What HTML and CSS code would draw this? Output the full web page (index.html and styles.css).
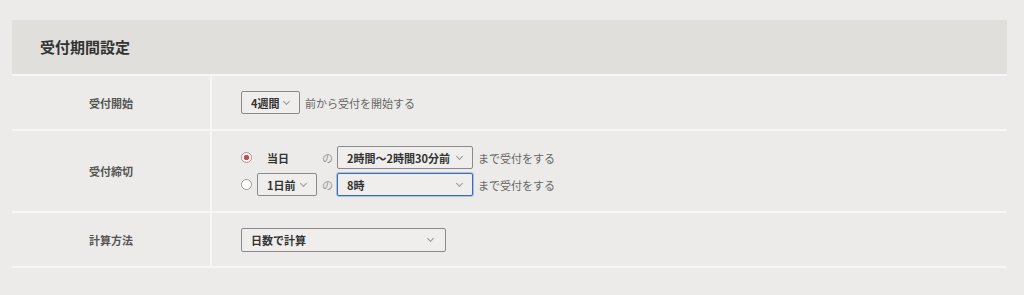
FILE: index.html
```html
<!DOCTYPE html>
<html lang="ja">
<head>
<meta charset="UTF-8">
<title>受付期間設定</title>
<link rel="stylesheet" href="styles.css">
</head>
<body>
<div class="wrap">
<h1>受付期間設定</h1>
<form action="#" class="form">
<div class="row">
<div class="label">受付開始</div>
<div class="field">
<div class="line">
<span class="sel w59"><select name="start"><option>4週間</option></select></span>
<span class="note">前から受付を開始する</span>
</div>
</div>
</div>
<div class="row row-tall">
<div class="label">受付締切</div>
<div class="field">
<div class="line">
<input type="radio" name="end" class="radio" checked>
<span class="day">当日</span>
<span class="no">の</span>
<span class="sel w136"><select name="time1"><option>2時間〜2時間30分前</option></select></span>
<span class="note">まで受付をする</span>
</div>
<div class="line">
<input type="radio" name="end" class="radio">
<span class="sel w60"><select name="day"><option>1日前</option></select></span>
<span class="no">の</span>
<span class="sel w136 focus"><select name="time2"><option>8時</option></select></span>
<span class="note">まで受付をする</span>
</div>
</div>
</div>
<div class="row">
<div class="label">計算方法</div>
<div class="field">
<div class="line">
<span class="sel w205"><select name="calc"><option>日数で計算</option></select></span>
</div>
</div>
</div>
</form>
</div>
</body>
</html>
```
FILE: styles.css
```css
html,body{
margin:0;
padding:0;
background:#ecebe9;
}
body{
font-family:"Noto Sans CJK JP","Noto Sans",sans-serif;
font-size:11px;
color:#333;
}
h1,form{
margin:0;
padding:0;
}
.wrap{
margin:20px 17px 0 12px;
}
h1{
height:54px;
line-height:54px;
padding-left:28px;
background:#e1dfdb;
font-size:15px;
font-weight:bold;
color:#333;
border-bottom:2px solid #f7f6f4;
}
.row{
display:grid;
grid-template-columns:200px 1fr;
height:53px;
border-bottom:2px solid #f7f6f4;
}
.row-tall{
height:80px;
}
.label{
display:flex;
align-items:center;
justify-content:center;
border-right:2px solid #f7f6f4;
font-weight:bold;
color:#555;
}
.field{
display:flex;
flex-direction:column;
justify-content:center;
gap:4px;
padding-left:29px;
}
.line{
display:flex;
align-items:center;
height:23px;
}
.sel{
position:relative;
display:inline-block;
height:23px;
}
.sel select{
-webkit-appearance:none;
appearance:none;
box-sizing:border-box;
width:100%;
height:100%;
margin:0;
padding:0 0 0 9px;
border:1px solid #8a8a8a;
border-radius:2px;
background:#efeeec;
font-family:inherit;
font-size:11px;
font-weight:bold;
color:#333;
outline:none;
}
.sel:after{
content:"";
position:absolute;
top:8px;
right:11px;
width:4px;
height:4px;
border-right:1px solid #999;
border-bottom:1px solid #999;
transform:rotate(45deg);
pointer-events:none;
}
.focus select{
border:1px solid #3d6cbf;
box-shadow:0 0 0 1px rgba(61,108,191,0.35);
}
.w59{width:59px;}
.w60{width:60px;}
.w136{width:136px;}
.w205{width:205px;height:24px;}
.w205:after{right:13px;}
.note{
margin-left:5px;
color:#666;
}
.no{
margin:0 4px 0 5px;
color:#999;
}
.radio{
-webkit-appearance:none;
appearance:none;
box-sizing:border-box;
width:11px;
height:11px;
margin:0 5px 0 0;
border:1px solid #999;
border-radius:50%;
background:#fff;
}
.radio:checked{
border-color:#c98a8a;
background:radial-gradient(circle,#c0504d 0,#c0504d 2.5px,#fff 3px);
}
.day{
box-sizing:border-box;
width:60px;
padding-left:10px;
font-weight:bold;
color:#333;
}
```
